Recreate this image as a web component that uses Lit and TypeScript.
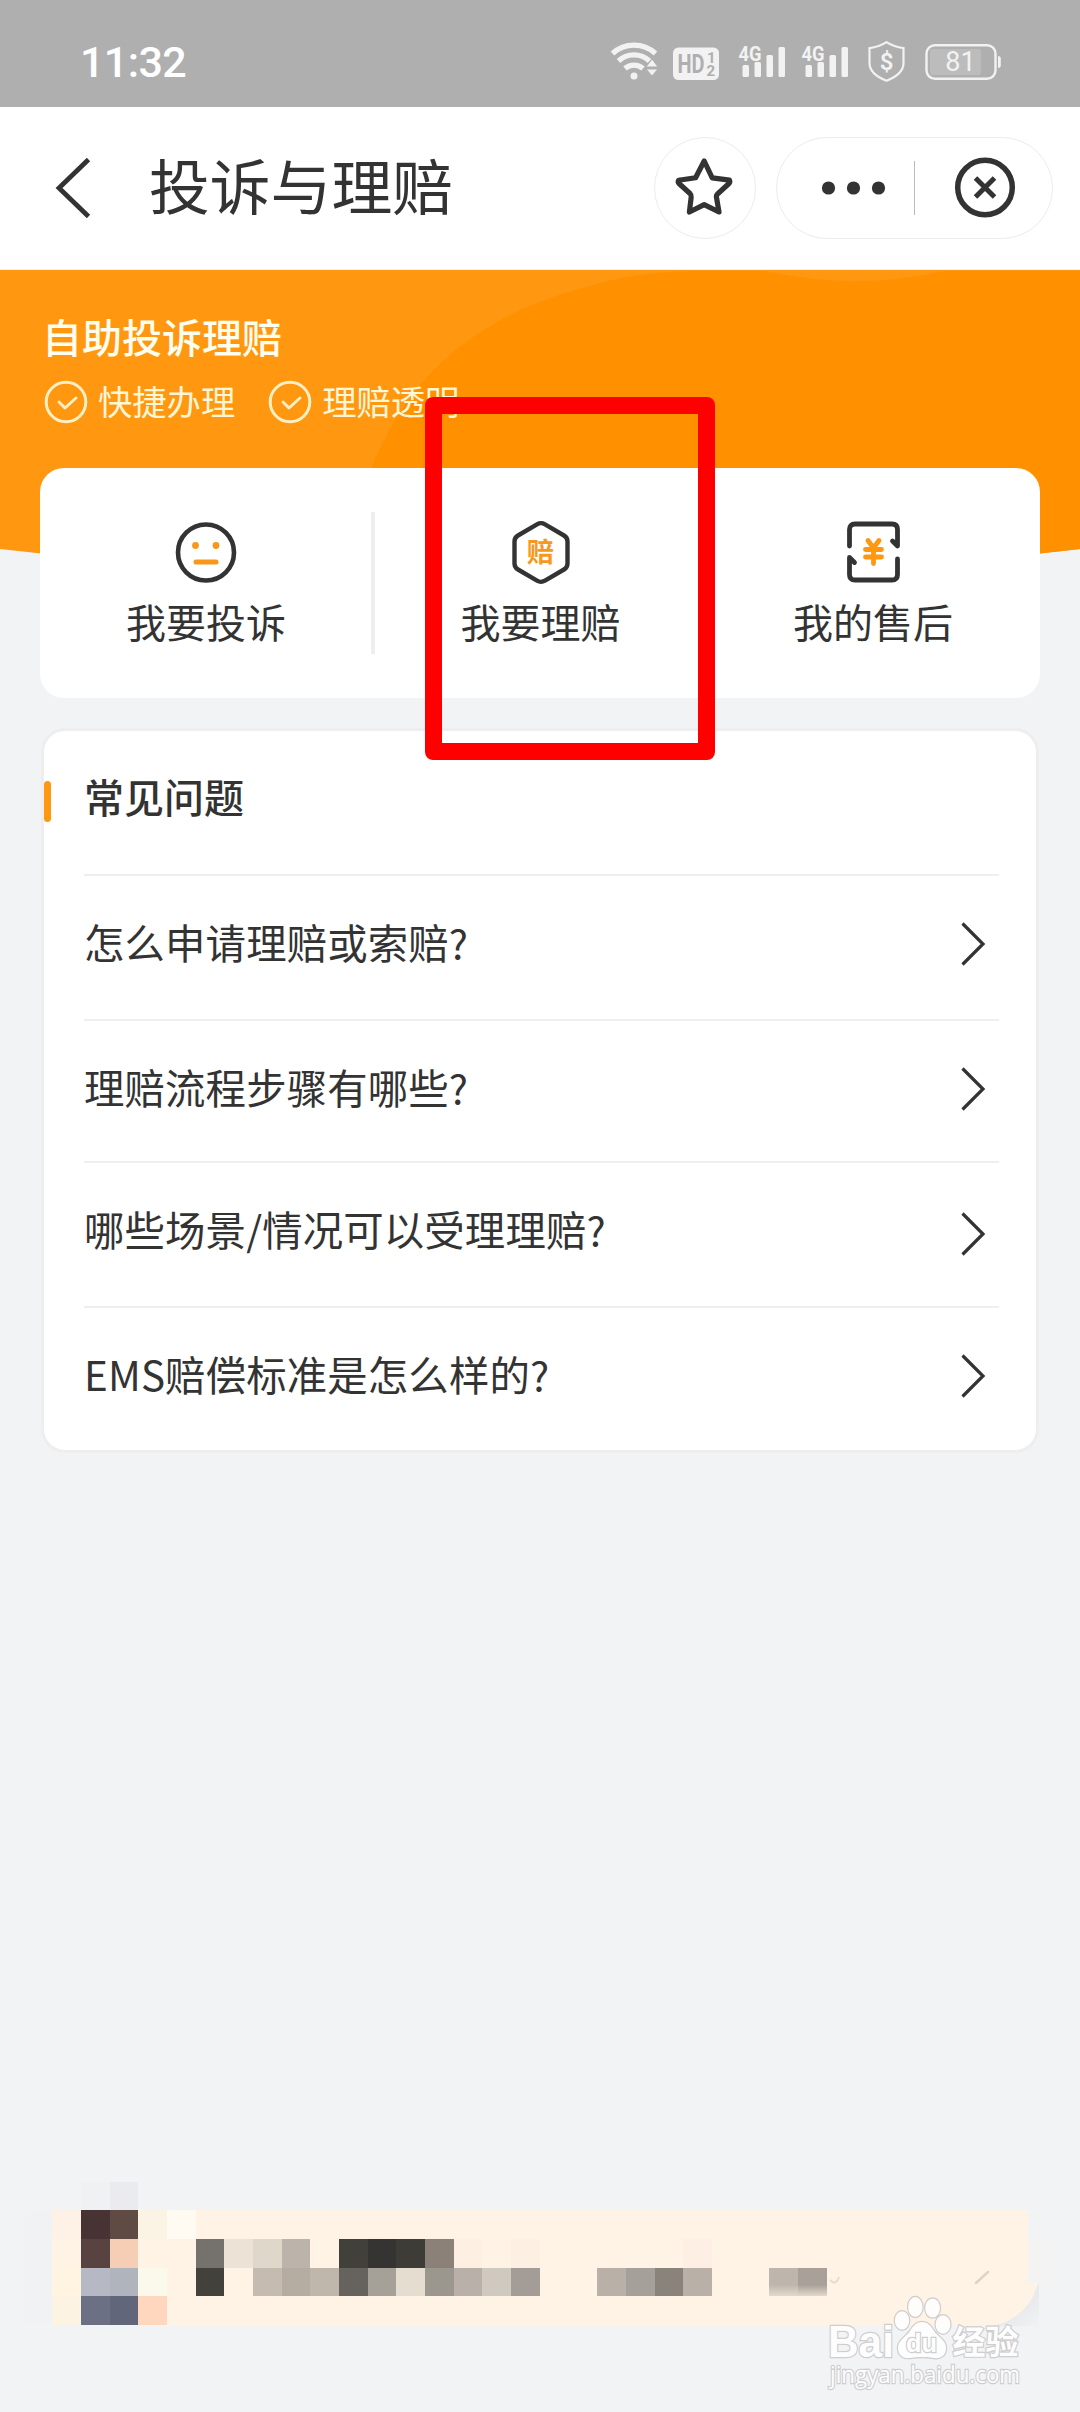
import { LitElement, html, svg, css } from "lit";
import { customElement } from "lit/decorators.js";
import { styleMap } from "lit/directives/style-map.js";

const FONT = css`"Noto Sans CJK SC", "Noto Sans", sans-serif`;

const signal = (x: number) => svg`
  <g transform="translate(${x} 0)">
    <text x="-4" y="60.5" font-size="21" font-weight="700" textLength="23" lengthAdjust="spacingAndGlyphs">4G</text>
    <rect x="0" y="65" width="6.5" height="12" rx="1.5" />
    <rect x="12" y="62" width="6.5" height="15" rx="1.5" />
    <rect x="24" y="55" width="6.5" height="22" rx="1.5" />
    <rect x="36" y="47" width="6.5" height="30" rx="1.5" />
  </g>`;

@customElement("status-bar")
class StatusBar extends LitElement {
  static styles = css`
    :host {
      display: flex;
      justify-content: space-between;
      height: 107px;
      background: #afafaf;
      color: #fff;
    }
    .time {
      padding-left: 80px;
      font: 500 43px/50px Roboto, sans-serif;
      letter-spacing: -0.600px;
      padding-top: 37px;
    }
    svg {
      display: block;
      fill: #f2f2f2;
      font-family: Roboto, sans-serif;
    }
  `;
  render() {
    return html`
      <div class="time">11:32</div>
      <svg width="480" height="107" viewBox="600 0 480 107">
        <g fill="none" stroke="#f2f2f2" stroke-width="5.2">
          <path d="M612.5 53.5a32 32 0 0 1 43 0" />
          <path d="M618.5 61a22.5 22.5 0 0 1 31 0" />
          <path d="M625 68.500a13.500 13.500 0 0 1 18 0" />
        </g>
        <circle cx="634" cy="76" r="3.500" />
        <path d="M652 59l6 8h-12z M646 69h12l-6 7z" stroke="#afafaf" stroke-width="1" />
        <rect x="673" y="47.500" width="46" height="32.500" rx="5.500" />
        <g fill="#afafaf" font-weight="700">
          <text x="677.500" y="73" font-size="26" textLength="27" lengthAdjust="spacingAndGlyphs">HD</text>
          <text x="707" y="62.500" font-size="15">1</text>
          <text x="706.500" y="76" font-size="15">2</text>
        </g>
        ${signal(742.5)} ${signal(805.5)}
        <path
          d="M886.500 42.200c5.500 3.600 11 5.300 17 6v14.800c0 8-6 13.500-17 17.800c-11-4.300-17-9.800-17-17.800v-14.800c6-.7 11.500-2.400 17-6z"
          fill="none" stroke="#f2f2f2" stroke-width="2.200"
        />
        <text x="886.500" y="69.500" font-size="24" font-weight="600" text-anchor="middle">$</text>
        <rect x="930" y="49" width="51" height="26" rx="3" fill="#bcbcbc" />
        <rect x="926.500" y="45.200" width="69" height="33.600" rx="8.500" fill="none" stroke="#f2f2f2" stroke-width="2.400" />
        <path d="M998 56a2.800 2.800 0 0 1 2.800 2.800v6.400a2.800 2.800 0 0 1-2.800 2.800z" />
        <text x="960.500" y="71" font-size="27" text-anchor="middle">81</text>
      </svg>
    `;
  }
}

@customElement("nav-header")
class NavHeader extends LitElement {
  static styles = css`
    :host {
      display: flex;
      align-items: center;
      box-sizing: border-box;
      height: 163px;
      padding: 0 27px 0 55px;
      background: #fff;
      color: #333;
      border-bottom: 1px solid #fbf3d4;
    }
    svg {
      display: block;
      flex: none;
    }
    .title {
      flex: 1;
      margin-left: 58px;
      font: 400 60.800px/80px ${FONT};
      margin-top: -8px;
    }
    .star,
    .pill {
      box-sizing: border-box;
      border: 1px solid #ececec;
      border-radius: 51px;
      height: 102px;
    }
    .star {
      width: 102px;
      margin-right: 20px;
    }
    .pill {
      width: 277px;
    }
  `;
  render() {
    return html`
      <svg width="36" height="60" viewBox="0 0 36 60">
        <path d="M33.500 1.500L4 30L33.500 58.500" fill="none" stroke="#333" stroke-width="4.800" />
      </svg>
      <div class="title">投诉与理赔</div>
      <div class="star">
        <svg width="100" height="100" viewBox="655 138 100 100">
          <path
            d="M704.200 161l8 16.800l17.300 2.400q.8 2-.5 3.300l-11.500 10.500q-1.500 1.500-1 3.500l2.500 14.500l-14.800-7.300l-14.800 7.300l1.800-15q.3-2-1.200-3.500l-11-10q-1.400-1.500-.4-3.300l17-2.400z"
            fill="none" stroke="#333" stroke-width="5.200" stroke-linejoin="round"
          />
        </svg>
      </div>
      <div class="pill">
        <svg width="275" height="100" viewBox="777 138 275 100">
          <g fill="#333">
            <circle cx="828.500" cy="188" r="6.600" />
            <circle cx="853.500" cy="188" r="6.600" />
            <circle cx="878.500" cy="188" r="6.600" />
          </g>
          <rect x="914" y="161" width="1" height="54" fill="#bbb" />
          <circle cx="985" cy="187.500" r="27.300" fill="none" stroke="#333" stroke-width="5.500" />
          <path d="M975.500 178l19 19M994.500 178l-19 19" stroke="#333" stroke-width="5" />
        </svg>
      </div>
    `;
  }
}

const complainIcon = svg`
  <circle cx="35" cy="35.500" r="28" fill="none" stroke="#333" stroke-width="4.600" />
  <g fill="#f7981d">
    <circle cx="24.500" cy="28.500" r="3.400" />
    <circle cx="45" cy="28.500" r="3.400" />
    <rect x="22.500" y="42.500" width="25" height="5" rx="2.500" />
  </g>`;

const claimIcon = svg`
  <path d="M31 7.300q4-2.300 8 0l19 11.200q3.500 2 3.500 6v22q0 4-3.500 6l-19 11.200q-4 2.300-8 0l-19-11.200q-3.500-2-3.500-6v-22q0-4 3.500-6z"
    fill="none" stroke="#333" stroke-width="4.400" />
  <text x="34.500" y="44.500" font-size="27" font-weight="700" text-anchor="middle" fill="#f7981d">赔</text>`;

const afterSaleIcon = svg`
  <g fill="none" stroke="#333" stroke-width="4.800" stroke-linecap="round" stroke-linejoin="round">
    <path d="M11.500 29v-16.500q0-5.500 5.500-5.500h37q5.500 0 5.500 5.500v16.500l-5-5" />
    <path d="M59.500 42v15.500q0 5.500-5.500 5.500h-37q-5.500 0-5.500-5.500v-17l5 5" />
  </g>
  <path d="M30 23.500l5.500 7.500l5.500-7.500M27.500 32.500h16M27.500 40h16M35.500 32v14.500" fill="none" stroke="#ff9711" stroke-width="4.800" stroke-linecap="round" stroke-linejoin="round" />`;

const ACTIONS = [
  { label: "我要投诉", icon: complainIcon },
  { label: "我要理赔", icon: claimIcon },
  { label: "我的售后", icon: afterSaleIcon },
];

@customElement("hero-section")
class HeroSection extends LitElement {
  static styles = css`
    :host {
      display: block;
      position: relative;
      height: 428px;
      font-family: ${FONT};
    }
    .backdrop {
      position: absolute;
      inset: 0;
      display: block;
    }
    .content {
      position: relative;
      padding: 38px 40px 0;
    }
    .heading {
      padding-left: 2px;
      font-size: 40px;
      line-height: 56px;
      font-weight: 500;
      color: #fffdee;
    }
    .points {
      display: flex;
      align-items: center;
      height: 44px;
      margin-top: 16px;
      padding-left: 4px;
      gap: 33px;
    }
    .point {
      display: flex;
      align-items: center;
      gap: 10px;
      font-size: 34.300px;
      line-height: 44px;
      color: #fff6d6;
    }
    .point span {
      margin-top: -4px;
    }
    .point svg {
      display: block;
    }
    .card {
      display: grid;
      grid-template-columns: 335px 335px 330px;
      box-sizing: border-box;
      height: 230px;
      margin-top: 44px;
      padding: 44px 0;
      border-radius: 24px;
      background: #fff;
    }
    .action {
      display: flex;
      flex-direction: column;
      align-items: center;
      gap: 6px;
      padding-top: 5px;
      border-right: 4px solid #eee;
      box-sizing: border-box;
      font-size: 40px;
      line-height: 56px;
      color: #333;
    }
    .action:first-child {
      padding-left: 1px;
    }
    .action:last-child {
      border: 0;
      padding-right: 4px;
    }
    .action svg {
      display: block;
    }
  `;
  render() {
    return html`
      <svg class="backdrop" width="1080" height="330" viewBox="0 270 1080 330">
        <path d="M0 270H1080V549Q540 612 0 549z" fill="#ff9711" />
        <path d="M355 520C385 400 455 320 590 286Q630 273 690 271H765Q855 291 945 271H1080V549Q720 590 355 588z" fill="#ff9100" />
      </svg>
      <div class="content">
        <div class="heading">自助投诉理赔</div>
        <div class="points">
          ${["快捷办理", "理赔透明"].map(
            (t) => html`<div class="point">
              <svg width="44" height="44" viewBox="0 0 44 44" fill="none" stroke="#fff0c4">
                <circle cx="22" cy="22" r="19.800" stroke-width="3" />
                <path d="M15 22l6 6l11-10" stroke-width="3" stroke-linecap="round" stroke-linejoin="round" />
              </svg>
              <span>${t}</span>
            </div>`
          )}
        </div>
        <div class="card">
          ${ACTIONS.map(
            (a) => html`<div class="action">
              <svg width="70" height="70" viewBox="0 0 70 70">${a.icon}</svg>
              <span>${a.label}</span>
            </div>`
          )}
        </div>
      </div>
    `;
  }
}

@customElement("faq-card")
class FaqCard extends LitElement {
  static styles = css`
    :host {
      display: block;
      box-sizing: border-box;
      height: 725px;
      margin: 30px 41px 0;
      border: 3px solid #eee;
      border-radius: 24px;
      background: #fff;
      color: #333;
      font: 400 40.400px/56px ${FONT};
    }
    .heading {
      display: flex;
      align-items: flex-start;
      height: 143px;
      box-sizing: border-box;
    }
    .mark {
      width: 7px;
      height: 41px;
      margin: 50px 33px 0 0;
      border-radius: 4px;
      background: #ff9711;
    }
    .heading span {
      padding-top: 37px;
      font-weight: 500;
      font-size: 40px;
    }
    .row {
      display: flex;
      align-items: center;
      justify-content: space-between;
      box-sizing: border-box;
      height: 138px;
      margin: 0 37px 7px 40px;
      padding-right: 13px;
      border-top: 2px solid #efefef;
    }
    .row span {
      margin-top: -5px;
      letter-spacing: 0.150px;
    }
    .row.second {
      margin-bottom: 4px;
    }
    .row.third svg {
      margin-top: 6px;
    }
    svg {
      display: block;
    }
  `;
  render() {
    const rows = [
      ["first", "怎么申请理赔或索赔?"],
      ["second", "理赔流程步骤有哪些?"],
      ["third", "哪些场景/情况可以受理理赔?"],
      ["fourth", "EMS赔偿标准是怎么样的?"],
    ];
    return html`
      <div class="heading"><i class="mark"></i><span>常见问题</span></div>
      ${rows.map(
        ([cls, text]) => html`<div class="row ${cls}">
          <span>${text}</span>
          <svg width="26" height="46" viewBox="0 0 26 46">
            <path d="M2.500 2.500L23 23L2.500 43.500" fill="none" stroke="#333" stroke-width="3.200" />
          </svg>
        </div>`
      )}
    `;
  }
}

// Pixelated notice: one array per row, blank cells let the banner show through.
const _ = "transparent";
const MOSAIC: string[][] = [
  [_, "#f0f1f3", "#ebeaee"],
  ["#fef1e5", "#473333", "#5f4a44", "#fbf3e4", "#fffaf2"],
  ["#fff3e5", "#584341", "#f6cdb5", _, _, "#75726d", "#ede2d6", "#dfd8ca", "#bcb3aa", _, "#42403b", "#363432", "#3e3c37", "#8b8179", "#fdefe1", _, "#fdefe1", _, _, _, _, _, "#fdefe3"],
  ["#fff3e2", "#b6b8c4", "#b0b4bd", "#fbf8ec", _, "#42413c", _, "#c5bbb1", "#b5aca2", "#bfb6ac", "#66625d", "#a5a199", "#e5ddd0", "#9b978e", "#b9b0aa", "#d0c9bf", "#a49c96", _, _, "#b9b1a7", "#a5a19a", "#89837c", "#b9b1a8", _, _, "#beb6ad", "#a9a199"],
  ["#fdf3e3", "#6c7084", "#62667b", "#ffd6be"],
];

@customElement("notice-banner")
class NoticeBanner extends LitElement {
  static styles = css`
    :host {
      display: block;
      position: relative;
      margin: 729px 0 0;
      height: 144px;
    }
    .shape {
      position: absolute;
      inset: 0;
      display: block;
    }
    .mosaic {
      position: relative;
      display: grid;
      grid-template-columns: repeat(34, 28.680px);
      grid-template-rows: 28px 29px 29px 28px 29px;
      padding-left: 52.400px;
    }
    .fade {
      background-image: linear-gradient(transparent 60%, #e3d9cc);
    }
  `;
  render() {
    return html`
      <svg class="shape" width="1080" height="144" viewBox="0 2182 1080 144">
        <defs>
          <linearGradient id="corner" x1="0" y1="0" x2="1" y2="1">
            <stop offset=".4" stop-color="#e4e6e8" />
            <stop offset="1" stop-color="#f1f2f4" />
          </linearGradient>
        </defs>
        <rect x="52" y="2182" width="976" height="28" fill="#f1f3f5" />
        <rect x="25" y="2210" width="27" height="115" fill="#f0f2f4" />
        <rect x="1028" y="2239" width="27" height="45" fill="#f3f3f3" />
        <path d="M1039 2284V2326H992z" fill="url(#corner)" />
        <path d="M52 2210H1028V2283H1038Q1030 2315 996 2325.500H52z" fill="#fff3e5" />
        <path d="M976 2283l12-11" stroke="#c8bfb5" stroke-width="2.500" stroke-linecap="round" opacity=".6" />
        <path d="M830 2280q6 6 9-3" stroke="#e6dcd1" stroke-width="2" fill="none" />
      </svg>
      <div class="mosaic">
        ${MOSAIC.map((row) =>
          Array.from({ length: 34 }, (_v, i) => {
            const last = row === MOSAIC[3] && (i === 25 || i === 26);
            return html`<i class=${last ? "fade" : "cell"} style=${styleMap({ backgroundColor: row[i] ?? _ })}></i>`;
          })
        )}
      </div>
    `;
  }
}

@customElement("app-root")
class AppRoot extends LitElement {
  static styles = css`
    :host {
      display: block;
      position: relative;
      width: 1080px;
      height: 2412px;
      overflow: hidden;
      background: #f2f3f5;
    }
    .highlight {
      position: absolute;
      left: 425px;
      top: 397px;
      width: 290px;
      height: 363px;
      box-sizing: border-box;
      border: 17px solid #f00;
      border-radius: 8px;
    }
    .watermark {
      position: absolute;
      left: 820px;
      top: 2290px;
      fill: #fff;
      stroke: #cacaca;
      stroke-width: 2.400px;
      paint-order: stroke;
      opacity: 0.9;
    }
    .brand {
      font: 700 44px "Liberation Sans", sans-serif;
    }
    .du {
      font: 700 26px "Liberation Sans", sans-serif;
    }
    .cn {
      font: 700 33px ${FONT};
    }
    .url {
      font: 400 24px "Open Sans", sans-serif;
    }
  `;
  render() {
    return html`
      <status-bar></status-bar>
      <nav-header></nav-header>
      <hero-section></hero-section>
      <faq-card></faq-card>
      <notice-banner></notice-banner>
      <div class="highlight"></div>
      <svg class="watermark" width="220" height="110" viewBox="820 2290 220 110">
        <ellipse cx="902" cy="2320.500" rx="7.200" ry="9.300" />
        <ellipse cx="915.300" cy="2307" rx="7.200" ry="10" />
        <ellipse cx="932.600" cy="2308" rx="7.400" ry="9.500" />
        <ellipse cx="943" cy="2324.500" rx="7.400" ry="9.300" />
        <path d="M922 2322c6 0 9 4 12 9c4 6 12 9 12 17c0 8-6 11-12 10c-6-1-7-1-12-1s-6 0-12 1c-7 1-12-3-12-10c0-8 8-11 12-17c3-5 6-9 12-9z" />
        <text class="brand" x="828" y="2357" textLength="66" lengthAdjust="spacingAndGlyphs">Bai</text>
        <text class="du" x="906" y="2352" textLength="31" lengthAdjust="spacingAndGlyphs">du</text>
        <text class="cn" x="952.500" y="2354" textLength="66" lengthAdjust="spacingAndGlyphs">经验</text>
        <text class="url" x="830" y="2382.500" textLength="190" lengthAdjust="spacingAndGlyphs">jingyan.baidu.com</text>
      </svg>
    `;
  }
}
